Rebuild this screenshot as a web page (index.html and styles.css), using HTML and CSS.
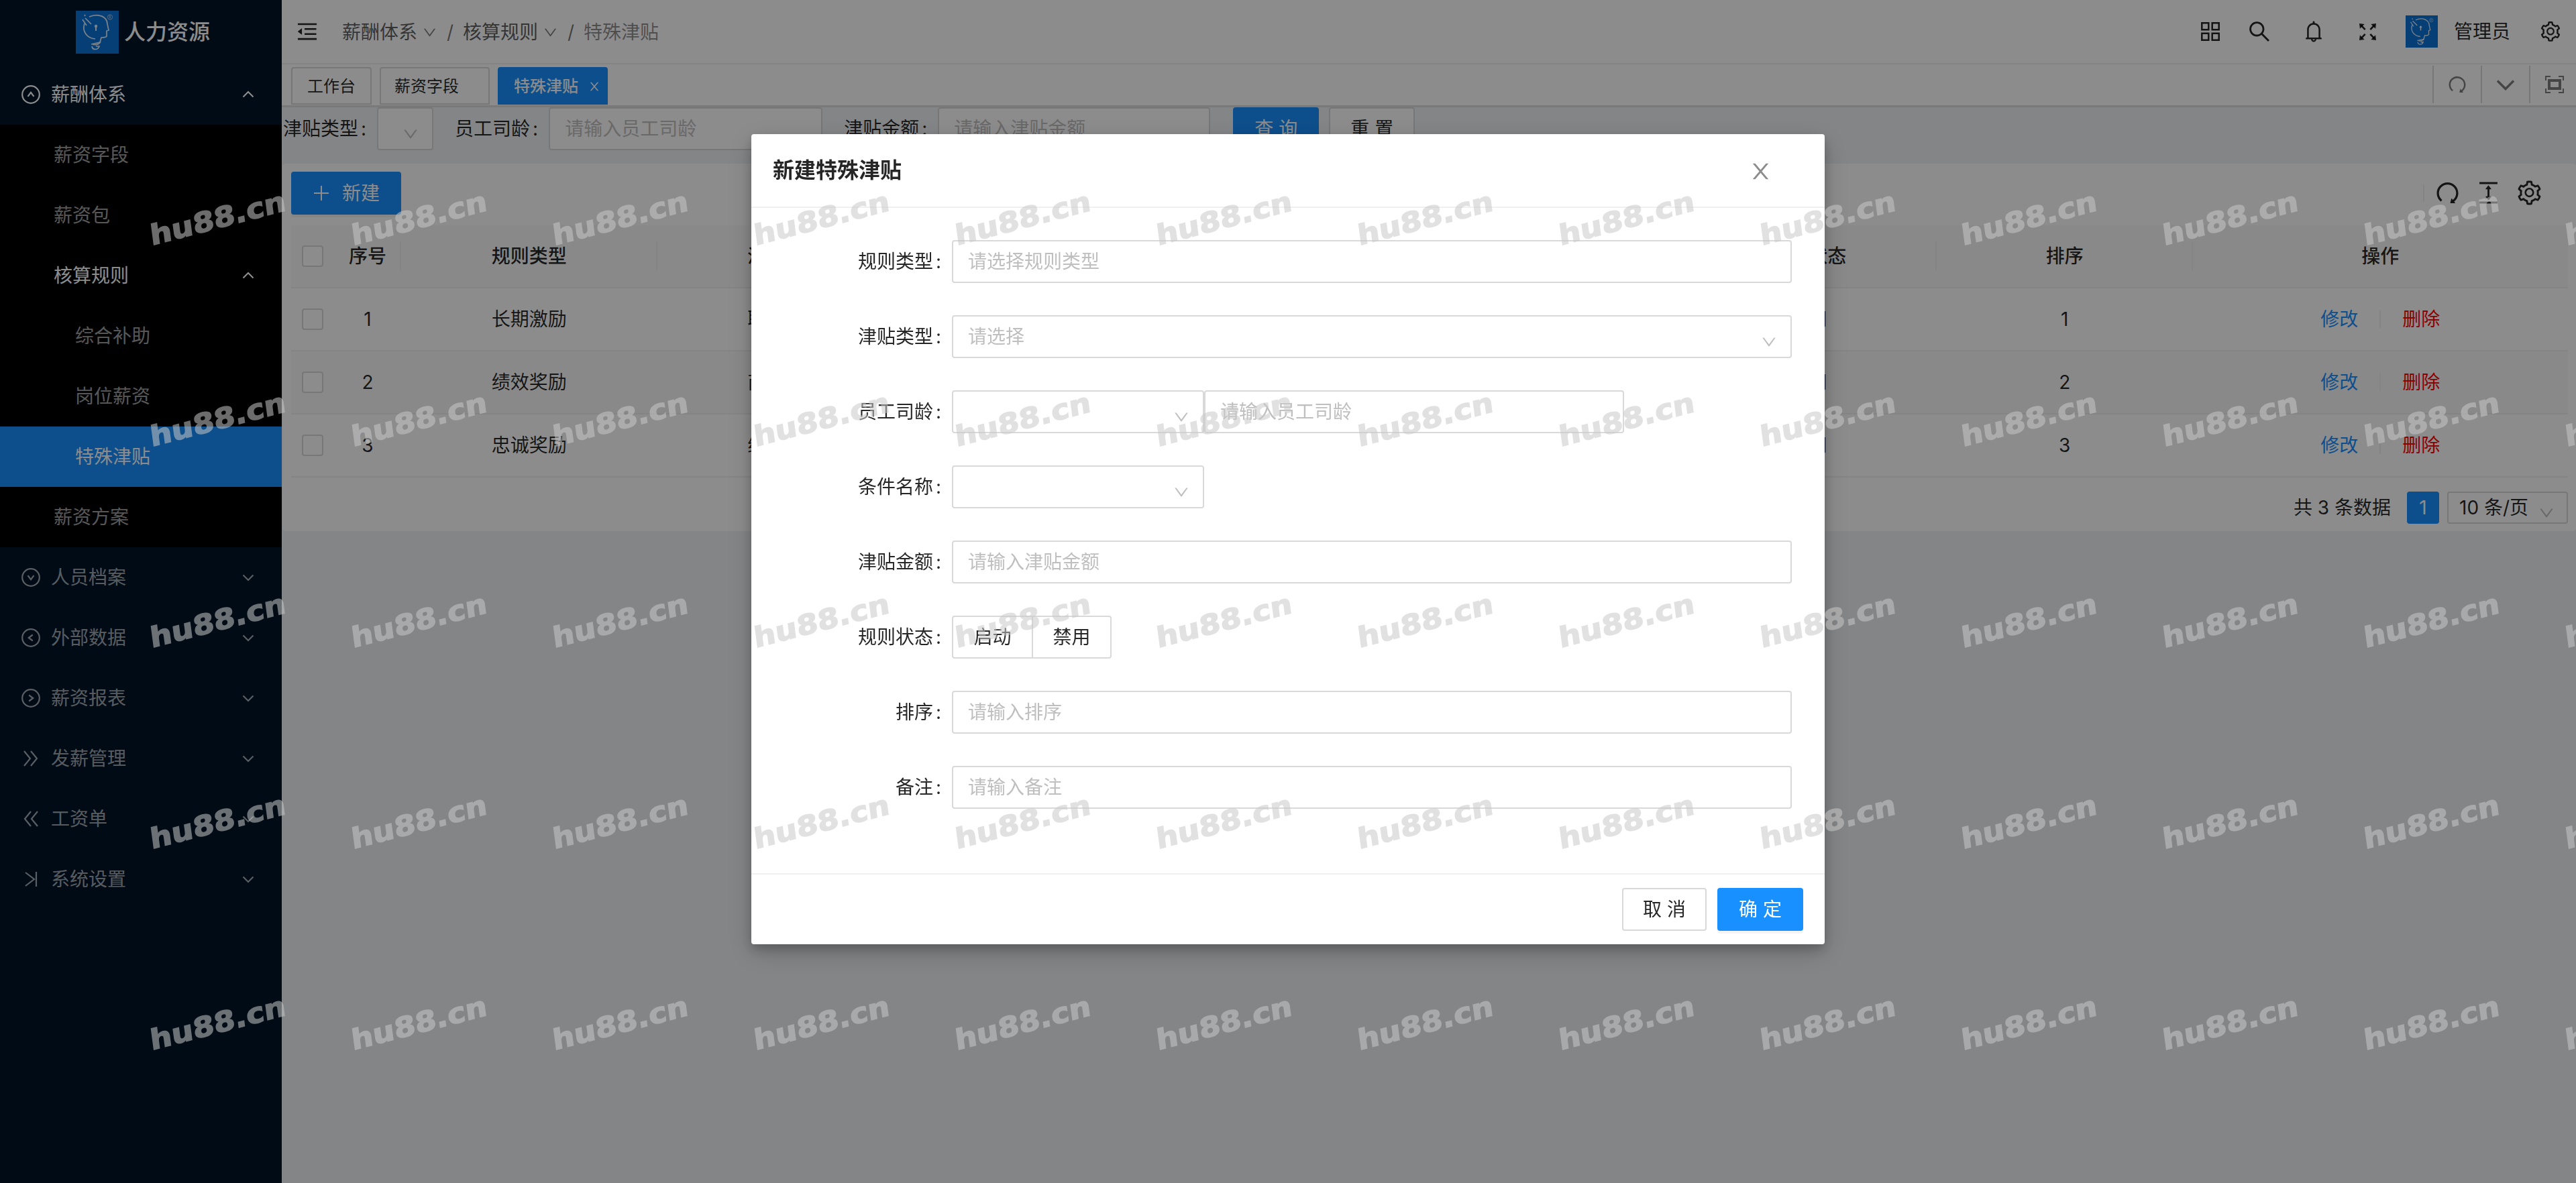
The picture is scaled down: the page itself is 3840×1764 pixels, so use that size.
FILE: index.html
```html
<!DOCTYPE html>
<html lang="zh-CN">
<head>
    <meta charset="UTF-8">
    <meta name="viewport" content="width=device-width, initial-scale=1.0">
    <title>人力资源</title>
    <link rel="stylesheet" href="styles.css">
</head>
<body>
    <!-- Иконки -->
    <svg class="sprite">
        <symbol id="down" viewBox="0 0 1024 1024"><path d="M884 256h-75c-5.100 0-9.900 2.500-12.900 6.600L512 654.200 227.900 262.600c-3-4.100-7.800-6.600-12.900-6.600h-75c-6.500 0-10.300 7.400-6.500 12.700l352.600 486.100c12.800 17.600 39 17.600 51.700 0l352.600-486.100c3.900-5.300.1-12.700-6.400-12.700z"/></symbol>
        <symbol id="arrow" viewBox="0 0 20 20"><path d="M2.500 6.500L10 14l7.500-7.500" fill="none" stroke="currentColor" stroke-width="2.200"/></symbol>
        <symbol id="fold" viewBox="0 0 1024 1024"><path d="M408 442h480c4.400 0 8-3.600 8-8v-56c0-4.400-3.600-8-8-8H408c-4.400 0-8 3.600-8 8v56c0 4.400 3.600 8 8 8zm-8 204c0 4.400 3.600 8 8 8h480c4.400 0 8-3.600 8-8v-56c0-4.400-3.600-8-8-8H408c-4.400 0-8 3.600-8 8v56zm504-486H120c-4.400 0-8 3.600-8 8v56c0 4.400 3.600 8 8 8h784c4.400 0 8-3.600 8-8v-56c0-4.400-3.600-8-8-8zm0 632H120c-4.400 0-8 3.600-8 8v56c0 4.400 3.600 8 8 8h784c4.400 0 8-3.600 8-8v-56c0-4.400-3.600-8-8-8zM115.400 518.900L271.700 642c5.800 4.600 14.400.5 14.400-6.900V388.900c0-7.400-8.500-11.500-14.400-6.900L115.400 505.100a8.740 8.740 0 000 13.800z"/></symbol>
        <symbol id="apps" viewBox="0 0 28 28"><path d="M1.300 1.300h10v10h-10zM16.700 1.300h10v10h-10zM1.300 16.700h10v10h-10zM16.700 16.700h10v10h-10z" fill="none" stroke="currentColor" stroke-width="2.500"/></symbol>
        <symbol id="search" viewBox="0 0 1024 1024"><path d="M909.600 854.500L649.900 594.800C690.200 542.700 712 479 712 412c0-80.200-31.300-155.400-87.900-212.100-56.600-56.700-132-87.900-212.100-87.900s-155.500 31.300-212.100 87.900C143.200 256.500 112 331.800 112 412c0 80.100 31.300 155.500 87.900 212.100C256.500 680.800 331.800 712 412 712c67 0 130.600-21.800 182.700-62l259.700 259.600a8.200 8.200 0 0011.600 0l43.600-43.500a8.200 8.200 0 000-11.600zM570.400 570.400C528 612.700 471.800 636 412 636s-116-23.300-158.400-65.600C211.300 528 188 471.800 188 412s23.300-116.100 65.600-158.400C296 211.300 352.200 188 412 188s116.100 23.200 158.400 65.600S636 352.200 636 412s-23.300 116.100-65.600 158.400z"/></symbol>
        <symbol id="bell" viewBox="0 0 1024 1024"><path d="M816 768h-24V428c0-141.100-104.300-257.800-240-277.200V112c0-22.100-17.900-40-40-40s-40 17.900-40 40v38.800C336.300 170.200 232 286.900 232 428v340h-24c-17.700 0-32 14.300-32 32v32c0 4.400 3.600 8 8 8h216c0 61.800 50.200 112 112 112s112-50.200 112-112h216c4.400 0 8-3.600 8-8v-32c0-17.700-14.300-32-32-32zM512 888c-26.500 0-48-21.500-48-48h96c0 26.500-21.500 48-48 48zM304 768V428c0-55.600 21.600-107.800 60.900-147.100S456.400 220 512 220c55.600 0 107.800 21.600 147.100 60.900S720 372.400 720 428v340H304z"/></symbol>
        <symbol id="expand" viewBox="0 0 28 28"><path d="M1 1l8 1-7 7zM27 1l-1 8-7-7zM1 27l1-8 7 7zM27 27l-8-1 7-7z"/><path d="M4 4l6 6.500M24 4l-6 6.500M4 24l6-6.500M24 24l-6-6.500" stroke="currentColor" stroke-width="2.800"/></symbol>
        <symbol id="redo" viewBox="0 0 1024 1024"><path d="M758.200 839.100C851.800 765.900 912 651.900 912 523.900 912 303 733.500 124.300 512.600 124 291.400 123.700 112 302.800 112 523.900c0 125.200 57.500 236.900 147.600 310.200 3.500 2.800 8.600 2.200 11.400-1.300l39.400-50.500c2.700-3.400 2.100-8.300-1.200-11.100-8.100-6.600-15.900-13.700-23.400-21.200a318.640 318.640 0 01-68.600-101.700C200.400 609 192 567.100 192 523.900s8.400-85.100 25.100-124.500c16.100-38.100 39.200-72.300 68.600-101.700 29.400-29.400 63.600-52.500 101.700-68.600C426.900 212.400 468.800 204 512 204s85.100 8.400 124.500 25.100c38.100 16.100 72.300 39.200 101.700 68.600 29.400 29.400 52.500 63.600 68.600 101.700 16.700 39.400 25.100 81.300 25.100 124.500s-8.400 85.100-25.100 124.500a318.640 318.640 0 01-68.600 101.700c-9.300 9.300-19.100 18-29.300 26L668.200 724a8 8 0 00-14.100 3l-39.600 162.200c-1.200 5 2.600 9.900 7.700 9.900l167 .8c6.700 0 10.500-7.700 6.300-12.900l-37.300-47.900z"/></symbol>
        <symbol id="full" viewBox="0 0 28 28"><path d="M1 8V2h7M20 2h7v6M27 20v6h-7M8 26H1v-6" fill="none" stroke="currentColor" stroke-width="2"/><path d="M6 8h16v12H6z" fill="none" stroke="currentColor" stroke-width="4"/></symbol>
        <symbol id="height" viewBox="0 0 1024 1024"><path d="M840 836H184c-4.400 0-8 3.600-8 8v60c0 4.400 3.600 8 8 8h656c4.400 0 8-3.600 8-8v-60c0-4.400-3.600-8-8-8zm0-724H184c-4.400 0-8 3.600-8 8v60c0 4.400 3.600 8 8 8h656c4.400 0 8-3.600 8-8v-60c0-4.400-3.600-8-8-8zM610.800 378c6 0 9.400-7 5.700-11.700L515.700 238.700a7.140 7.140 0 00-11.300 0L403.600 366.300a7.230 7.230 0 005.700 11.700H476v268h-62.800c-6 0-9.400 7-5.700 11.700l100.800 127.500c2.900 3.700 8.500 3.700 11.300 0l100.800-127.500c3.700-4.700.4-11.700-5.700-11.700H548V378h62.800z"/></symbol>
        <symbol id="setting" viewBox="0 0 1024 1024"><path d="M924.800 625.700l-65.500-56c3.100-19 4.700-38.400 4.700-57.800s-1.600-38.800-4.700-57.800l65.500-56a32.030 32.030 0 009.300-35.200l-.9-2.600a443.740 443.740 0 00-79.700-137.900l-1.800-2.100a32.120 32.120 0 00-35.100-9.500l-81.300 28.900c-30-24.600-63.500-44-99.700-57.600l-15.700-85a32.050 32.050 0 00-25.800-25.700l-2.700-.5c-52.100-9.400-106.900-9.400-159 0l-2.700.5a32.050 32.050 0 00-25.800 25.700l-15.800 85.400a351.860 351.860 0 00-99 57.400l-81.900-29.100a32 32 0 00-35.100 9.500l-1.800 2.100a446.020 446.020 0 00-79.700 137.900l-.9 2.600c-4.500 12.500-.8 26.500 9.300 35.200l66.300 56.600c-3.100 18.800-4.600 38-4.600 57.100 0 19.200 1.500 38.400 4.600 57.100L99 625.500a32.030 32.030 0 00-9.300 35.200l.9 2.600c18.100 50.400 44.900 96.900 79.700 137.900l1.800 2.100a32.120 32.120 0 0035.100 9.500l81.900-29.100c29.800 24.500 63.100 43.900 99 57.400l15.800 85.400a32.050 32.050 0 0025.800 25.700l2.700.5a449.400 449.400 0 00159 0l2.700-.5a32.050 32.050 0 0025.800-25.700l15.700-85a350 350 0 0099.700-57.600l81.300 28.900a32 32 0 0035.100-9.500l1.800-2.100c34.800-41.100 61.600-87.500 79.700-137.900l.9-2.600c4.500-12.300.8-26.300-9.300-35zM788.300 465.900c2.500 15.100 3.800 30.600 3.800 46.100s-1.300 31-3.800 46.100l-6.600 40.100 74.700 63.900a370.030 370.030 0 01-42.600 73.600L721 702.800l-31.400 25.800c-23.900 19.600-50.500 35-79.300 45.800l-38.100 14.300-17.900 97a377.500 377.500 0 01-85 0l-17.900-97.200-37.800-14.500c-28.500-10.800-55-26.200-78.700-45.700l-31.400-25.900-93.400 33.200c-17-22.900-31.200-47.600-42.600-73.600l75.500-64.500-6.500-40c-2.400-14.900-3.700-30.300-3.700-45.500 0-15.300 1.200-30.600 3.700-45.500l6.500-40-75.500-64.500c11.300-26.100 25.600-50.700 42.600-73.600l93.400 33.200 31.400-25.900c23.700-19.500 50.200-34.900 78.700-45.700l37.900-14.300 17.900-97.200c28.100-3.200 56.800-3.200 85 0l17.900 97 38.100 14.300c28.700 10.800 55.400 26.200 79.300 45.800l31.400 25.800 92.800-32.900c17 22.900 31.200 47.600 42.600 73.600L781.800 426l6.500 39.900zM512 326c-97.200 0-176 78.800-176 176s78.800 176 176 176 176-78.800 176-176-78.800-176-176-176zm79.200 255.200A111.600 111.600 0 01512 614c-29.900 0-58-11.700-79.200-32.800A111.600 111.600 0 01400 502c0-29.900 11.700-58 32.800-79.200C454 401.600 482.100 390 512 390c29.900 0 58 11.600 79.200 32.800A111.600 111.600 0 01624 502c0 29.900-11.700 58-32.800 79.200z"/></symbol>
        <symbol id="close" viewBox="0 0 1024 1024"><path d="M563.800 512l262.500-312.900c4.400-5.200.7-13.100-6.100-13.100h-79.800c-4.700 0-9.200 2.100-12.300 5.700L511.600 449.800 295.100 191.700c-3-3.600-7.500-5.700-12.300-5.700H203c-6.800 0-10.500 7.900-6.100 13.100L459.400 512 196.900 824.900A7.950 7.950 0 00203 838h79.800c4.700 0 9.200-2.100 12.300-5.700l216.500-258.100 216.500 258.100c3 3.600 7.500 5.700 12.300 5.700h79.800c6.800 0 10.500-7.900 6.100-13.100L563.800 512z"/></symbol>
        <symbol id="circle" viewBox="0 0 28 28"><path d="M14 1.200a12.800 12.800 0 100 25.600a12.800 12.800 0 100-25.600M9.500 16.800l4.500-6 4.500 6" fill="none" stroke="currentColor" stroke-width="2.200"/></symbol>
        <symbol id="double" viewBox="0 0 28 28"><path d="M4 3l9 11-9 11M14 3l9 11-9 11" fill="none" stroke="currentColor" stroke-width="2.200"/></symbol>
        <symbol id="last" viewBox="0 0 28 28"><path d="M6 4l13 10L6 24M22 3v22" fill="none" stroke="currentColor" stroke-width="2.200"/></symbol>
        <symbol id="head" viewBox="0 0 64 64">
            <rect width="64" height="64" fill="#0a74d8"/>
            <g fill="none" stroke="#e3eefa" stroke-width="1.700">
                <path d="M20 9c14-6 27 0 27 11l2 9-3 1v8c-1 2-4 2-8 2l-2 7-13 3M13 19c-4 11 3 22 16 23"/>
                <path d="M10 13l6 9M14 11l9 9M13 6l1 2M25 50c6 2 11-1 12-4M24 53c1 6 9 6 11 0h-5"/>
                <path d="M30 23v7" stroke-width="2"/>
            </g>
            <circle cx="30" cy="23" r="2.200" fill="#e3eefa"/>
            <circle cx="51" cy="9.500" r="3.600" fill="none" stroke="#9cc4ec"/>
            <path d="M50 11.500v-4h1.500v2H50M51 9.500l1.200 2" fill="none" stroke="#9cc4ec" stroke-width=".7"/>
        </symbol>
    </svg>

    <div class="layout">
        <aside class="sider">
            <div class="logo"><svg width="64" height="64"><use href="#head"/></svg>人力资源</div>
            <div class="menu-item open"><svg class="ico"><use href="#circle"/></svg>薪酬体系<svg class="arrow up"><use href="#arrow"/></svg></div>
            <div class="submenu">
                <div class="menu-item">薪资字段</div>
                <div class="menu-item">薪资包</div>
                <div class="menu-item open">核算规则<svg class="arrow up"><use href="#arrow"/></svg></div>
                <div class="menu-item deep">综合补助</div>
                <div class="menu-item deep">岗位薪资</div>
                <div class="menu-item deep active">特殊津贴</div>
                <div class="menu-item">薪资方案</div>
            </div>
            <div class="menu-item"><svg class="ico r180"><use href="#circle"/></svg>人员档案<svg class="arrow"><use href="#arrow"/></svg></div>
            <div class="menu-item"><svg class="ico r270"><use href="#circle"/></svg>外部数据<svg class="arrow"><use href="#arrow"/></svg></div>
            <div class="menu-item"><svg class="ico r90"><use href="#circle"/></svg>薪资报表<svg class="arrow"><use href="#arrow"/></svg></div>
            <div class="menu-item"><svg class="ico"><use href="#double"/></svg>发薪管理<svg class="arrow"><use href="#arrow"/></svg></div>
            <div class="menu-item"><svg class="ico r180"><use href="#double"/></svg>工资单<svg class="arrow"><use href="#arrow"/></svg></div>
            <div class="menu-item"><svg class="ico"><use href="#last"/></svg>系统设置<svg class="arrow"><use href="#arrow"/></svg></div>
        </aside>

        <main class="main">
            <header class="header">
                <svg class="fold"><use href="#fold"/></svg>
                <div class="breadcrumb">
                    <span>薪酬体系</span><svg><use href="#down"/></svg><i>/</i>
                    <span>核算规则</span><svg><use href="#down"/></svg><i>/</i>
                    <span class="last">特殊津贴</span>
                </div>
                <div class="actions">
                    <svg class="a-apps"><use href="#apps"/></svg>
                    <svg class="a-search"><use href="#search"/></svg>
                    <svg class="a-bell"><use href="#bell"/></svg>
                    <svg class="a-expand"><use href="#expand"/></svg>
                    <svg class="a-avatar"><use href="#head"/></svg>
                    <span>管理员</span>
                    <svg class="a-setting"><use href="#setting"/></svg>
                </div>
            </header>

            <div class="tabs">
                <div class="tab">工作台</div>
                <div class="tab closable">薪资字段</div>
                <div class="tab active">特殊津贴<svg><use href="#close"/></svg></div>
                <div class="tab-tools">
                    <div><svg><use href="#redo"/></svg></div>
                    <div><svg><use href="#arrow"/></svg></div>
                    <div><svg class="tool-full"><use href="#full"/></svg></div>
                </div>
            </div>

            <div class="search">
                <label>津贴类型<b>:</b></label>
                <div class="select s-type"><svg><use href="#down"/></svg></div>
                <label>员工司龄<b>:</b></label>
                <div class="input s-input">请输入员工司龄</div>
                <label>津贴金额<b>:</b></label>
                <div class="input s-money">请输入津贴金额</div>
                <button class="btn primary">查 询</button>
                <button class="btn">重 置</button>
            </div>

            <div class="card">
                <div class="toolbar">
                    <button class="btn primary add"><svg viewBox="0 0 24 24"><path d="M12 1v22M1 12h22" stroke="currentColor" stroke-width="2"/></svg>新建</button>
                    <div class="table-tools">
                        <svg><use href="#redo"/></svg>
                        <svg><use href="#height"/></svg>
                        <svg><use href="#setting"/></svg>
                    </div>
                </div>
                <div class="table">
                    <div class="tr th">
                        <div class="check"><i></i></div><div>序号</div><div>规则类型</div><div>津贴类型</div><div>员工司龄</div><div>条件名称</div><div>津贴金额</div><div>规则状态</div><div>排序</div><div>操作</div>
                    </div>
                    <div class="tr">
                        <div class="check"><i></i></div><div>1</div><div>长期激励</div><div>职务津贴</div><div></div><div></div><div></div><div>启用</div><div>1</div>
                        <div class="ops"><a>修改</a><a class="del">删除</a></div>
                    </div>
                    <div class="tr even">
                        <div class="check"><i></i></div><div>2</div><div>绩效奖励</div><div>商务津贴</div><div></div><div></div><div></div><div>启用</div><div>2</div>
                        <div class="ops"><a>修改</a><a class="del">删除</a></div>
                    </div>
                    <div class="tr">
                        <div class="check"><i></i></div><div>3</div><div>忠诚奖励</div><div>绩效津贴</div><div></div><div></div><div></div><div>启用</div><div>3</div>
                        <div class="ops"><a>修改</a><a class="del">删除</a></div>
                    </div>
                </div>
                <div class="pagination">
                    <span>共 3 条数据</span>
                    <div class="page">1</div>
                    <div class="select size">10 条/页<svg><use href="#down"/></svg></div>
                </div>
            </div>
        </main>
    </div>

    <!-- Модальное окно -->
    <div class="mask">
        <div class="modal">
            <div class="modal-header">新建特殊津贴<svg><use href="#close"/></svg></div>
            <div class="modal-body">
                <div class="row"><label>规则类型<b>:</b></label><div class="input">请选择规则类型</div></div>
                <div class="row"><label>津贴类型<b>:</b></label><div class="select ph">请选择<svg><use href="#down"/></svg></div></div>
                <div class="row"><label>员工司龄<b>:</b></label><div class="select short"><svg><use href="#down"/></svg></div><div class="input middle">请输入员工司龄</div></div>
                <div class="row"><label>条件名称<b>:</b></label><div class="select short"><svg><use href="#down"/></svg></div></div>
                <div class="row"><label>津贴金额<b>:</b></label><div class="input">请输入津贴金额</div></div>
                <div class="row"><label>规则状态<b>:</b></label><div class="radio"><span>启动</span><span>禁用</span></div></div>
                <div class="row"><label>排序<b>:</b></label><div class="input">请输入排序</div></div>
                <div class="row"><label>备注<b>:</b></label><div class="input">请输入备注</div></div>
            </div>
            <div class="modal-footer">
                <button class="btn cancel">取 消</button>
                <button class="btn primary">确 定</button>
            </div>
        </div>
    </div>

    <!-- Водяной знак -->
    <svg class="watermark">
        <defs>
            <pattern id="wm" x="200" y="230" width="300" height="300" patternUnits="userSpaceOnUse">
                <text transform="translate(26 136) rotate(-14.600) skewX(-7)" textLength="208" lengthAdjust="spacingAndGlyphs">hu88.cn</text>
            </pattern>
        </defs>
        <rect x="200" y="230" width="3640" height="1534" fill="url(#wm)"/>
    </svg>
</body>
</html>
```

FILE: styles.css
```css
* {
    box-sizing: border-box;
}
body {
    margin: 0;
    height: 1764px;
    overflow: hidden;
    font-family: "Inter", "Noto Sans CJK SC", sans-serif;
    font-size: 28px;
    line-height: 44px;
    color: rgba(0, 0, 0, 0.85);
    background: #f0f2f5;
}
svg {
    fill: currentColor;
    flex: none;
}
i {
    font-style: normal;
}
.sprite {
    position: absolute;
    width: 0;
    height: 0;
}
.layout {
    display: flex;
    height: 100%;
}

/* меню */
.sider {
    flex: none;
    width: 420px;
    background: #001529;
    color: rgba(255, 255, 255, 0.65);
}
.logo {
    display: flex;
    align-items: center;
    gap: 8px;
    height: 96px;
    padding-left: 113px;
    font-size: 32px;
    font-weight: 500;
    color: #fff;
}
.menu-item {
    display: flex;
    align-items: center;
    height: 90px;
    padding: 0 40px 0 32px;
}
.menu-item.open {
    color: #fff;
}
.submenu {
    background: #000;
}
.submenu .menu-item {
    padding-left: 80px;
}
.submenu .deep {
    padding-left: 112px;
}
.menu-item.active {
    background: #1890ff;
    color: #fff;
}
.ico {
    width: 28px;
    height: 28px;
    margin-right: 16px;
}
.r90 {
    transform: rotate(90deg);
}
.r180 {
    transform: rotate(180deg);
}
.r270 {
    transform: rotate(270deg);
}
.arrow {
    width: 20px;
    height: 20px;
    margin-left: auto;
}
.arrow.up {
    transform: rotate(180deg);
}

/* шапка */
.main {
    flex: 1;
    min-width: 0;
}
.header {
    display: flex;
    align-items: center;
    height: 96px;
    padding: 0 24px 0 20px;
    background: #fff;
    border-bottom: 2px solid #eee;
}
.fold {
    width: 36px;
    height: 36px;
    margin-right: 34px;
}
.breadcrumb {
    display: flex;
    align-items: center;
    padding-top: 2px;
    color: rgba(0, 0, 0, 0.65);
}
.breadcrumb svg {
    width: 23px;
    height: 23px;
    margin-left: 7px;
    color: rgba(0, 0, 0, 0.5);
}
.breadcrumb i {
    width: 38px;
    text-align: center;
    color: rgba(0, 0, 0, 0.55);
}
.breadcrumb .last {
    color: rgba(0, 0, 0, 0.45);
}
.actions {
    display: flex;
    align-items: center;
    margin-left: auto;
}
.a-apps {
    width: 28px;
    height: 28px;
    margin-right: 40px;
}
.a-search {
    width: 38px;
    height: 38px;
    margin-right: 44px;
}
.a-bell {
    width: 36px;
    height: 36px;
    margin-right: 49px;
}
.a-expand {
    width: 27px;
    height: 27px;
    margin-right: 43px;
}
.a-avatar {
    width: 48px;
    height: 48px;
    margin-right: 24px;
}
.a-setting {
    width: 34px;
    height: 34px;
    margin-left: 43px;
    margin-right: -3px;
}

/* вкладки */
.tabs {
    display: flex;
    gap: 12px;
    height: 64px;
    padding: 4px 0 0 14px;
    background: #fff;
    border-bottom: 3px solid #dcdcdc;
    font-size: 24px;
}
.tab {
    display: flex;
    align-items: center;
    height: 56px;
    padding: 2px 22px 0;
    border: 2px solid #d9d9d9;
    border-radius: 4px 4px 0 0;
    white-space: nowrap;
}
.tab.closable {
    width: 164px;
    padding-left: 20px;
}
.tab.active {
    width: 164px;
    padding-right: 0;
    background: #1890ff;
    border-color: #1890ff;
    color: #fff;
    font-weight: 500;
}
.tab svg {
    width: 20px;
    height: 20px;
    margin-left: 14px;
}
.tab-tools {
    display: flex;
    margin-left: auto;
    margin-top: -2px;
    height: 56px;
    color: rgba(0, 0, 0, 0.5);
}
.tab-tools div {
    display: flex;
    align-items: center;
    justify-content: center;
    width: 72px;
    border-left: 2px solid #d9d9d9;
}
.tab-tools div:last-child {
    width: 70px;
    padding-left: 4px;
}
.tab-tools svg {
    width: 32px;
    height: 32px;
}
.tab-tools .tool-full {
    width: 28px;
    height: 28px;
}

/* поля */
label {
    white-space: nowrap;
}
label b {
    font-weight: 400;
    margin: 0 16px 0 4px;
}
.input,
.select {
    display: flex;
    align-items: center;
    height: 64px;
    padding: 0 22px;
    background: #fff;
    border: 2px solid #d9d9d9;
    border-radius: 4px;
}
.input,
.ph {
    color: #bfbfbf;
}
.select svg {
    width: 26px;
    height: 26px;
    margin: 15px -3px 0 auto;
    color: rgba(0, 0, 0, 0.25);
}
.btn {
    height: 64px;
    padding: 0 30px;
    font: inherit;
    background: #fff;
    border: 2px solid #d9d9d9;
    border-radius: 4px;
    color: rgba(0, 0, 0, 0.85);
    white-space: nowrap;
}
.btn.primary {
    background: #1890ff;
    border-color: #1890ff;
    color: #fff;
    box-shadow: 0 4px 0 rgba(0, 0, 0, 0.045);
}
.search {
    display: flex;
    align-items: center;
    height: 64px;
    margin-bottom: 20px;
    padding-left: 2px;
}
.s-type {
    width: 84px;
    margin-right: 32px;
}
.s-input {
    width: 408px;
    margin-right: 32px;
}
.s-money {
    width: 406px;
    margin-right: 34px;
}
.search .btn {
    width: 128px;
    margin-right: 15px;
    padding: 0;
}

/* таблица */
.card {
    height: 548px;
    margin-left: 1px;
    padding: 12px 12px 0 13px;
    background: #fff;
    border-radius: 4px;
}
.toolbar {
    display: flex;
    align-items: center;
    justify-content: space-between;
    height: 80px;
    padding-bottom: 16px;
}
.add {
    display: flex;
    align-items: center;
    gap: 19px;
    padding: 0 30px 0 31px;
}
.add svg {
    width: 24px;
    height: 24px;
}
.table-tools {
    display: flex;
    align-items: center;
    gap: 20px;
    height: 26px;
    margin-right: 37px;
    padding-left: 14px;
    border-left: 2px solid #f0f0f0;
}
.table-tools svg {
    width: 41px;
    height: 41px;
    margin-top: -2px;
}
.tr {
    display: grid;
    grid-template-columns: 64px 100px repeat(7, 381.500px) 1fr;
    height: 94px;
    align-items: center;
    text-align: center;
    border-bottom: 2px solid #f0f0f0;
}
.th {
    background: #fafafa;
    font-weight: 500;
}
.th div:not(.check):not(:last-child) {
    padding-left: 2px;
    border-right: 2px solid #f0f0f0;
}
.even {
    background: #fafafa;
}
.check {
    display: flex;
    padding-left: 16px;
}
.check i {
    width: 32px;
    height: 32px;
    background: #fff;
    border: 2px solid #d9d9d9;
    border-radius: 4px;
}
.ops a {
    color: #1890ff;
}
.ops .del {
    margin-left: 32px;
    padding-left: 34px;
    background: linear-gradient(#f0f0f0, #f0f0f0) 0 50% / 2px 26px no-repeat;
    color: #ff0000;
}
.pagination {
    display: flex;
    align-items: center;
    justify-content: flex-end;
    gap: 12px;
    height: 90px;
}
.pagination span {
    margin-right: 12px;
}
.page {
    width: 48px;
    height: 48px;
    border-radius: 4px;
    background: #1890ff;
    color: #fff;
    line-height: 48px;
    text-align: center;
}
.size {
    width: 180px;
    height: 48px;
    padding: 0 20px 0 16px;
}

/* модальное окно */
.mask {
    position: fixed;
    inset: 0;
    background: rgba(0, 0, 0, 0.45);
}
.modal {
    width: 1600px;
    height: 1208px;
    margin: 200px auto 0;
    background: #fff;
    border-radius: 4px;
    box-shadow: 0 8px 16px rgba(0, 0, 0, 0.2), 0 12px 40px rgba(0, 0, 0, 0.19);
}
.modal-header {
    display: flex;
    align-items: center;
    justify-content: space-between;
    height: 110px;
    padding: 0 77px 0 32px;
    border-bottom: 2px solid #f0f0f0;
    font-size: 32px;
    font-weight: 700;
}
.modal-header svg {
    width: 37px;
    height: 37px;
    margin-top: 2px;
    color: rgba(0, 0, 0, 0.45);
}
.modal-body {
    height: 992px;
    padding: 48px 49px 0 0;
}
.row {
    display: flex;
    align-items: center;
    margin-bottom: 48px;
}
.row label {
    width: 299px;
    text-align: right;
}
.row .input,
.row .ph {
    flex: 1;
}
.row .short {
    width: 376px;
}
.row .middle {
    flex: none;
    width: 626px;
}
.radio {
    display: flex;
    height: 64px;
    border: 2px solid #d9d9d9;
    border-radius: 4px;
    line-height: 60px;
}
.radio span {
    width: 117px;
    text-align: center;
}
.radio span + span {
    border-left: 2px solid #d9d9d9;
}
.modal-footer {
    display: flex;
    align-items: center;
    justify-content: flex-end;
    gap: 16px;
    height: 106px;
    padding: 0 32px;
    border-top: 2px solid #f0f0f0;
}
.modal-footer .btn {
    width: 128px;
    padding: 0;
}
.modal-footer .cancel {
    width: 126px;
}

/* водяной знак */
.watermark {
    position: fixed;
    inset: 0;
    width: 100%;
    height: 100%;
    pointer-events: none;
}
.watermark text {
    font: 700 41px "DejaVu Sans", sans-serif;
    fill: #c8c8c8;
    stroke: #c8c8c8;
    stroke-width: 1.5px;
    opacity: 0.54;
}
```
